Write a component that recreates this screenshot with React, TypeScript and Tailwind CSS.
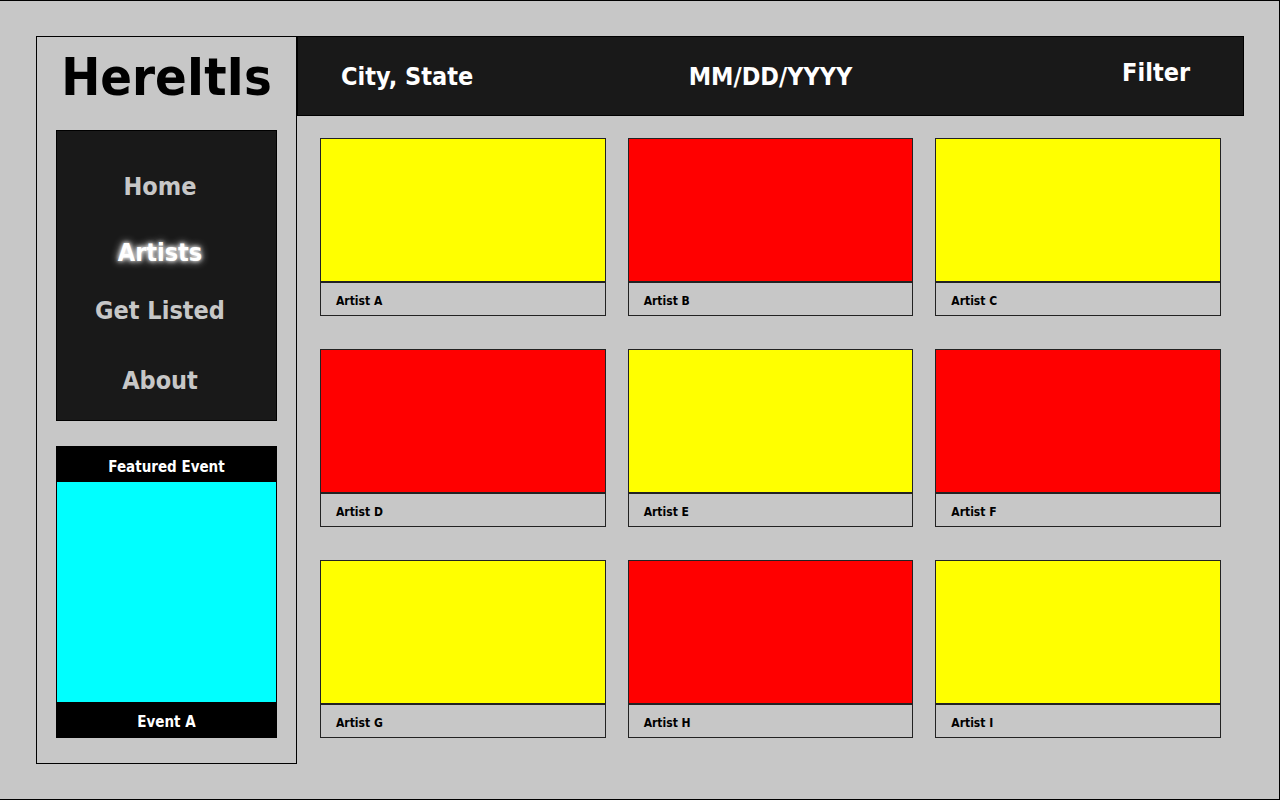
const navItems = [
  { label: 'Home', href: '#home', active: false, space: 'mt-0' },
  { label: 'Artists', href: '#artists', active: true, space: 'mt-7' },
  { label: 'Get Listed', href: '#get-listed', active: false, space: 'mt-5' },
  { label: 'About', href: '#about', active: false, space: 'mt-8' },
];

const artists = ['A', 'B', 'C', 'D', 'E', 'F', 'G', 'H', 'I'];

function Sidebar() {
  return (
    <aside className="w-[261px] shrink-0 border border-black px-[19px] pb-[25px]">
      <h1 className="mb-[13px] whitespace-nowrap text-center text-[52px] leading-[80px]">
        HereItIs
      </h1>
      <nav className="border border-black bg-[#191919] pt-[37px] pr-[13px] pb-5">
        <ul className="flex flex-col items-center text-[25px] leading-[38px]">
          {navItems.map((item) => (
            <li key={item.label} className={item.space}>
              <a
                href={item.href}
                aria-current={item.active ? 'page' : undefined}
                className={
                  item.active
                    ? 'text-white [text-shadow:0_0_4px_#fff,0_0_8px_#fff]'
                    : 'text-[#c7c7c7]'
                }
              >
                {item.label}
              </a>
            </li>
          ))}
        </ul>
      </nav>
      <section className="mt-[25px] border border-black bg-black text-center text-[15px] leading-[29px] text-white">
        <h2 className="pt-1.5">Featured Event</h2>
        <div className="h-[220px] bg-[#00ffff]" />
        <p className="pt-1.5">Event A</p>
      </section>
    </aside>
  );
}

function FilterBar() {
  return (
    <header className="grid h-20 grid-cols-3 items-center border border-black bg-[#191919] pt-0.5 text-[25px] leading-8 text-white">
      <button type="button" className="justify-self-start pl-[43px]">
        City, State
      </button>
      <button type="button" className="justify-self-center">
        MM/DD/YYYY
      </button>
      <button type="button" className="justify-self-end pr-[53px] pb-2">
        Filter
      </button>
    </header>
  );
}

function ArtistCard({ name, color }: { name: string; color: string }) {
  return (
    <li>
      <a href="#artist" className="block border border-[#222]">
        <div className={`h-36 border-b-2 border-[#222] ${color}`} />
        <p className="pt-1 pl-[15px] text-xs leading-7">{name}</p>
      </a>
    </li>
  );
}

export default function App() {
  return (
    <div className="min-h-screen border-y border-r border-black bg-[#c7c7c7] py-[35px] pr-[35px] pl-9 font-['DejaVu_Sans_Condensed','DejaVu_Sans',sans-serif] font-bold text-black">
      <div className="flex items-start">
        <Sidebar />
        <main className="min-w-0 flex-1">
          <FilterBar />
          <ul className="grid grid-cols-3 gap-x-[22px] gap-y-[33px] px-[23px] pt-[22px]">
            {artists.map((letter, i) => (
              <ArtistCard
                key={letter}
                name={`Artist ${letter}`}
                color={i % 2 === 0 ? 'bg-[#ffff00]' : 'bg-[#ff0000]'}
              />
            ))}
          </ul>
        </main>
      </div>
    </div>
  );
}
